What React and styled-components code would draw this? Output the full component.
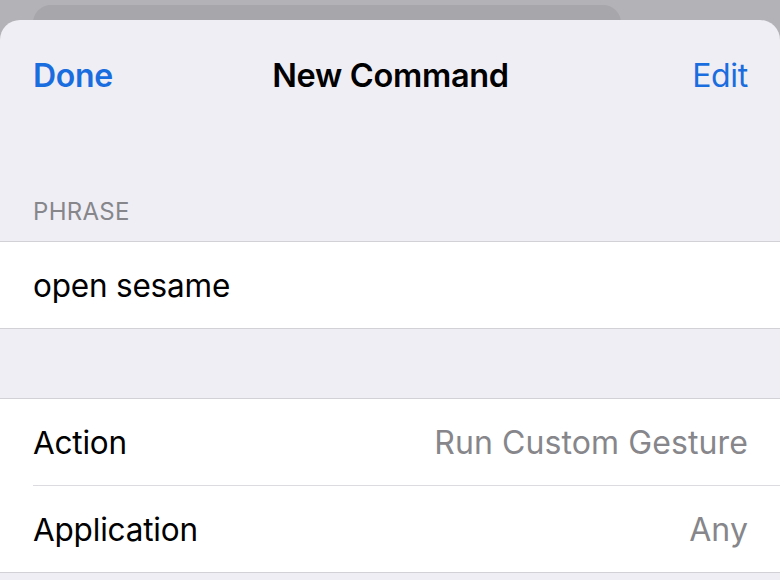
import React from "react";
import styled, { createGlobalStyle } from "styled-components";

const GlobalStyle = createGlobalStyle`
  html, body {
    margin: 0;
    padding: 0;
    background: #b3b2b7;
    font-family: Inter, "Noto Sans", sans-serif;
    -webkit-font-smoothing: antialiased;
  }
`;

const Screen = styled.div`
  width: 780px;
  height: 580px;
  overflow: hidden;
  background: #b3b2b7;
  display: flex;
  flex-direction: column;
  padding-top: 5px;
  box-sizing: border-box;
`;

const BackCard = styled.div`
  width: 588px;
  height: 30px;
  margin-left: 33px;
  margin-bottom: -15px;
  background: #a7a6ab;
  border-radius: 18px 18px 0 0;
  flex-shrink: 0;
`;

const Sheet = styled.div`
  width: 100%;
  flex: 1;
  background: #efeef4;
  border-radius: 20px 20px 0 0;
  display: flex;
  flex-direction: column;
`;

const NavBar = styled.div`
  height: 112px;
  display: grid;
  grid-template-columns: 1fr auto 1fr;
  align-items: center;
  padding: 0 32px 2px 33px;
  box-sizing: border-box;
`;

const NavButton = styled.div`
  font-size: 32px;
  color: #1a6ddf;
  font-weight: ${(p) => (p.$bold ? 600 : 400)};
  justify-self: ${(p) => (p.$right ? "end" : "start")};
  letter-spacing: -0.3px;
`;

const Title = styled.div`
  font-size: 32.5px;
  font-weight: 600;
  color: #000;
  letter-spacing: -0.3px;
`;

const SectionHeader = styled.div`
  margin-top: 66px;
  padding: 0 33px 15px;
  height: 28px;
  line-height: 28px;
  font-size: 24px;
  color: #86868b;
  letter-spacing: 0.3px;
`;

const Group = styled.div`
  background: #fff;
  border-top: 1.5px solid #d2d1d6;
  border-bottom: 1.5px solid #d2d1d6;
  margin-top: ${(p) => p.$gap || 0}px;
`;

const Row = styled.div`
  height: 86px;
  display: flex;
  align-items: center;
  justify-content: space-between;
  margin-left: 33px;
  padding-right: 32px;
  border-top: ${(p) => (p.$divider ? "1.5px solid #dcdbe0" : "none")};
  font-size: 31.5px;
  color: #000;
  letter-spacing: -0.2px;
`;

const Value = styled.span`
  color: #86868b;
  font-size: 32px;
  letter-spacing: 0.1px;
`;

export default function App() {
  return (
    <>
      <GlobalStyle />
      <Screen>
        <BackCard />
        <Sheet>
          <NavBar>
            <NavButton $bold>Done</NavButton>
            <Title>New Command</Title>
            <NavButton $right>Edit</NavButton>
          </NavBar>
          <SectionHeader>PHRASE</SectionHeader>
          <Group>
            <Row>open sesame</Row>
          </Group>
          <Group $gap={69}>
            <Row>
              <span>Action</span>
              <Value>Run Custom Gesture</Value>
            </Row>
            <Row $divider>
              <span>Application</span>
              <Value>Any</Value>
            </Row>
          </Group>
        </Sheet>
      </Screen>
    </>
  );
}
